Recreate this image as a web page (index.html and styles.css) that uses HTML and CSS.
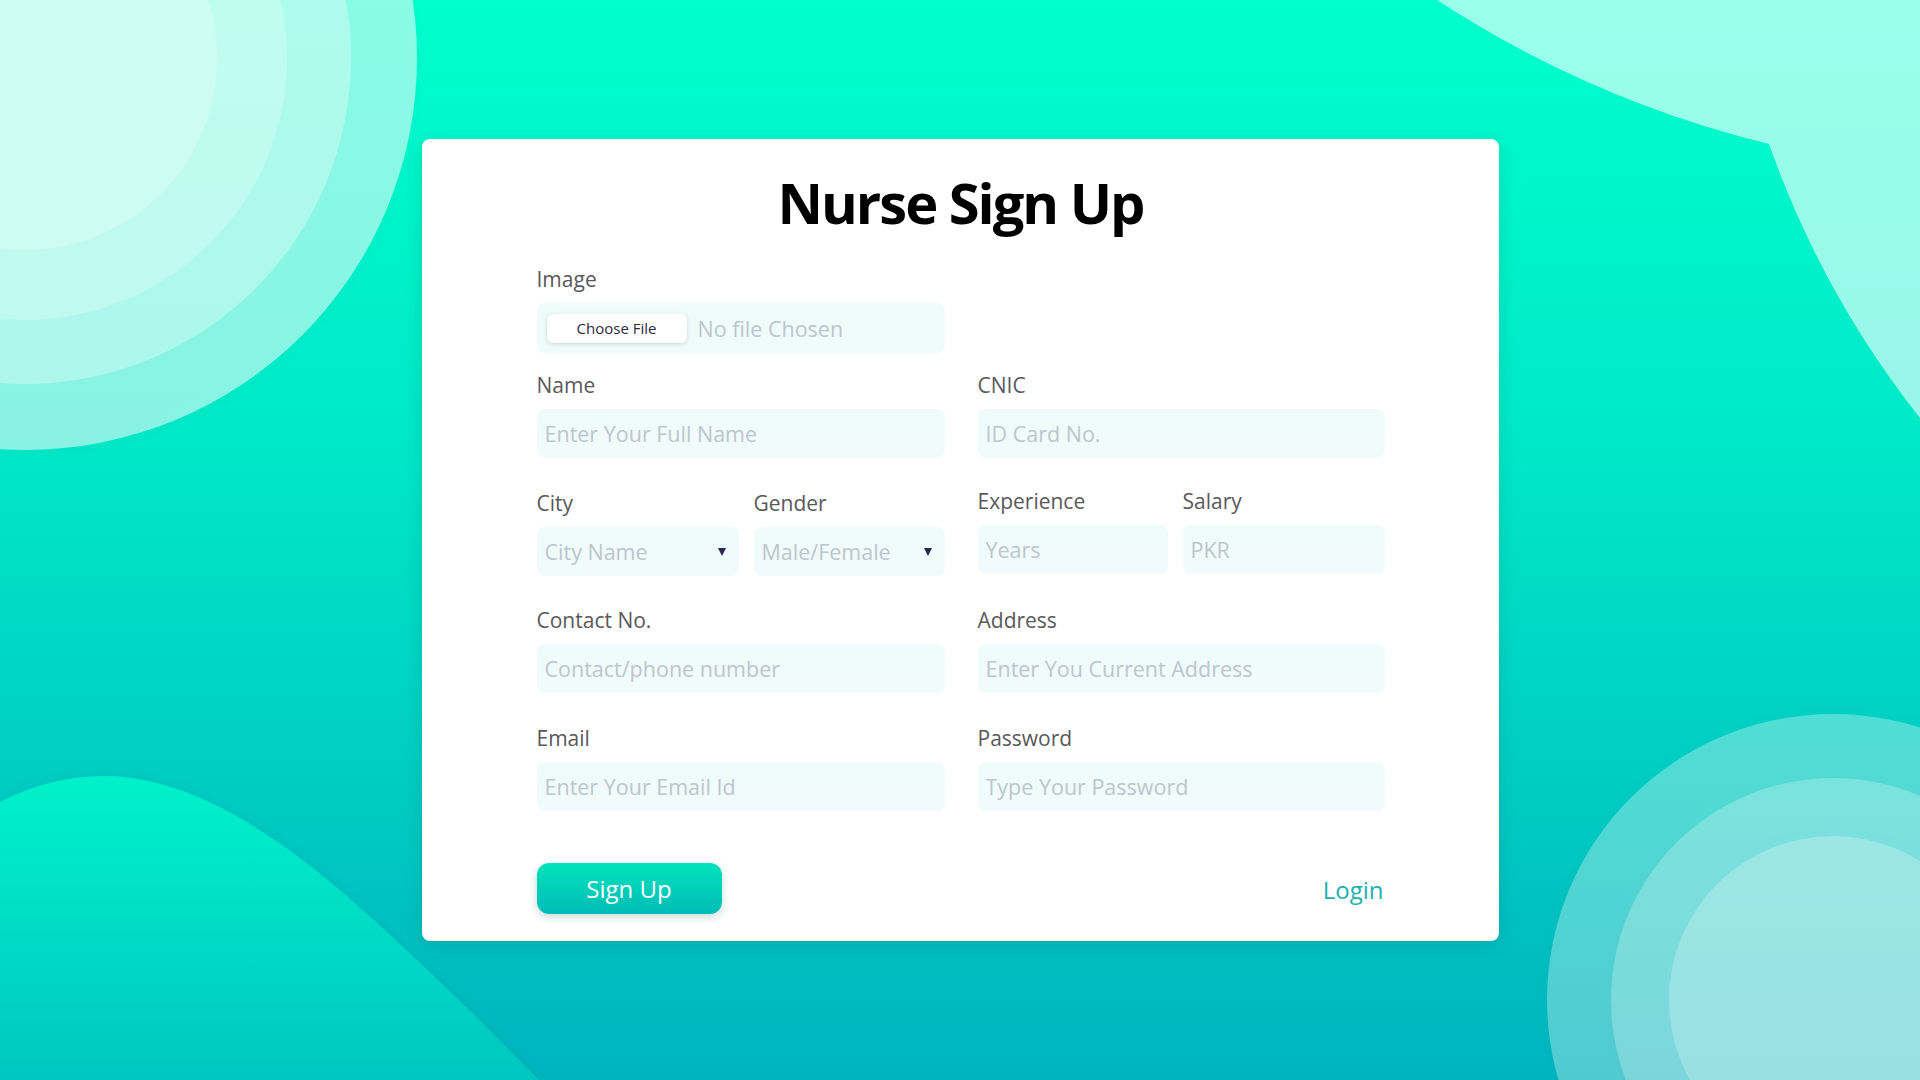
FILE: index.html
```html
<!DOCTYPE html>
<html lang="en">
<head>
<meta charset="utf-8">
<title>Nurse Sign Up</title>
<link rel="stylesheet" href="styles.css">
</head>
<body>
<svg class="bg" width="1920" height="1080" viewBox="0 0 1920 1080" aria-hidden="true">
  <defs>
    <filter id="soft" x="-20%" y="-20%" width="140%" height="140%">
      <feDropShadow dx="0" dy="0" stdDeviation="5" flood-color="#006a66" flood-opacity="0.12"/>
    </filter>
    <linearGradient id="hill" x1="0" y1="0" x2="0" y2="1">
      <stop offset="0" stop-color="#00f2ca"/>
      <stop offset="1" stop-color="#00c6c1"/>
    </linearGradient>
  </defs>
  <path d="M1437,0 Q1590,100 1769,144 Q1822,294 1920,418 L1920,0 Z" fill="#ffffff" fill-opacity="0.6"/>
  <g filter="url(#soft)">
    <circle cx="25" cy="58" r="392" fill="#ffffff" fill-opacity="0.52"/>
    <circle cx="25" cy="58" r="326" fill="#ffffff" fill-opacity="0.31"/>
    <circle cx="25" cy="58" r="262" fill="#ffffff" fill-opacity="0.23"/>
    <circle cx="25" cy="58" r="192" fill="#ffffff" fill-opacity="0.22"/>
  </g>
  <path filter="url(#soft)" d="M0,802 C35,784 70,776 104,776 C180,776 260,822 340,890 C420,960 490,1030 539,1080 L0,1080 Z" fill="url(#hill)"/>
  <g filter="url(#soft)">
    <circle cx="1833" cy="1000" r="286" fill="#ffffff" fill-opacity="0.3"/>
    <circle cx="1833" cy="1000" r="222" fill="#ffffff" fill-opacity="0.24"/>
    <circle cx="1833" cy="1000" r="164" fill="#ffffff" fill-opacity="0.23"/>
  </g>
</svg>

<main class="page">
  <form class="card" onsubmit="return false">
    <h1 class="title">Nurse Sign Up</h1>

    <div class="field field-image">
      <span class="label">Image</span>
      <label class="file-box">
        <span class="file-btn">Choose File</span>
        <span class="file-text">No file Chosen</span>
        <input class="file-input" type="file">
      </label>
    </div>

    <div class="grid">
      <div class="field">
        <label class="label">Name</label>
        <input class="control" type="text" placeholder="Enter Your Full Name">
      </div>
      <div class="field">
        <label class="label">CNIC</label>
        <input class="control" type="text" placeholder="ID Card No.">
      </div>

      <div class="pair pair-left">
        <div class="field">
          <label class="label">City</label>
          <div class="select-wrap">
            <select class="control select">
              <option>City Name</option>
            </select>
          </div>
        </div>
        <div class="field">
          <label class="label">Gender</label>
          <div class="select-wrap">
            <select class="control select">
              <option>Male/Female</option>
            </select>
          </div>
        </div>
      </div>
      <div class="pair pair-right">
        <div class="field">
          <label class="label">Experience</label>
          <input class="control" type="text" placeholder="Years">
        </div>
        <div class="field">
          <label class="label">Salary</label>
          <input class="control" type="text" placeholder="PKR">
        </div>
      </div>

      <div class="field">
        <label class="label">Contact No.</label>
        <input class="control" type="text" placeholder="Contact/phone number">
      </div>
      <div class="field">
        <label class="label">Address</label>
        <input class="control" type="text" placeholder="Enter You Current Address">
      </div>

      <div class="field">
        <label class="label">Email</label>
        <input class="control" type="email" placeholder="Enter Your Email Id">
      </div>
      <div class="field">
        <label class="label">Password</label>
        <input class="control" type="password" placeholder="Type Your Password">
      </div>
    </div>

    <div class="actions">
      <button class="btn-primary" type="submit">Sign Up</button>
      <a class="login-link" href="#">Login</a>
    </div>
  </form>
</main>
</body>
</html>
```

FILE: styles.css
```css
* {
  box-sizing: border-box;
}

html, body {
  margin: 0;
  padding: 0;
}

body {
  width: 1920px;
  height: 1080px;
  overflow: hidden;
  position: relative;
  background: linear-gradient(180deg, #00ffcc 0%, #00e9c8 40%, #00b4be 100%);
  font-family: "Open Sans", "Noto Sans", sans-serif;
}

.bg {
  position: absolute;
  left: 0;
  top: 0;
  z-index: 0;
}

.page {
  position: relative;
  z-index: 1;
  height: 1080px;
  display: flex;
  align-items: center;
  justify-content: center;
}

.card {
  width: 1077px;
  background: #ffffff;
  border-radius: 8px;
  padding: 28px 114px 27px 115px;
  box-shadow: 0 4px 18px rgba(0, 60, 60, 0.16);
  display: flex;
  flex-direction: column;
}

.title {
  margin: 0 0 28px;
  font-size: 56px;
  line-height: 70px;
  font-weight: 700;
  letter-spacing: -2px;
  text-align: center;
  color: #000000;
}

.field {
  display: flex;
  flex-direction: column;
}

.label {
  font-size: 21px;
  line-height: 28px;
  color: #595959;
  margin-bottom: 10px;
}

.field-image {
  width: 408px;
  margin-bottom: 18px;
}

.file-box {
  height: 50px;
  border-radius: 8px;
  background: #effcfa;
  display: flex;
  align-items: center;
  padding-left: 10px;
  gap: 11px;
  cursor: pointer;
}

.file-btn {
  width: 140px;
  height: 29px;
  border-radius: 6px;
  background: #ffffff;
  box-shadow: 0 1px 4px rgba(0, 0, 0, 0.16);
  font-size: 15px;
  color: #2d2a3e;
  display: flex;
  align-items: center;
  justify-content: center;
}

.file-text {
  font-size: 21.5px;
  color: #bdc5cd;
}

.file-input {
  display: none;
}

.grid {
  display: grid;
  grid-template-columns: 408px 407px;
  column-gap: 33px;
  row-gap: 30.5px;
}

.pair {
  display: grid;
  column-gap: 15px;
}

.pair-left {
  grid-template-columns: 202px 191px;
}

.pair-right {
  grid-template-columns: 190px 202px;
  margin-top: -2px;
}

.control {
  width: 100%;
  height: 49px;
  border: none;
  outline: none;
  border-radius: 8px;
  background: linear-gradient(180deg, #effcfa 0%, #f1fbfb 100%);
  padding: 0 10px 0 8px;
  font-family: "Open Sans", "Noto Sans", sans-serif;
  font-size: 21.5px;
  color: #333333;
}

.control::placeholder {
  color: #bdc5cd;
  opacity: 1;
}

.select-wrap {
  position: relative;
}

.select {
  appearance: none;
  -webkit-appearance: none;
  color: #bdc5cd;
  cursor: pointer;
}

.select-wrap::after {
  content: "";
  position: absolute;
  right: 13px;
  top: 21px;
  width: 0;
  height: 0;
  border-left: 4px solid transparent;
  border-right: 4px solid transparent;
  border-top: 8px solid #2c2752;
  pointer-events: none;
}

.actions {
  margin-top: 52px;
  display: flex;
  align-items: center;
  justify-content: space-between;
}

.btn-primary {
  width: 185px;
  height: 51px;
  border: none;
  border-radius: 12px;
  background: linear-gradient(180deg, #00e3bb 0%, #00bcb8 100%);
  box-shadow: 0 3px 8px rgba(0, 80, 80, 0.22);
  color: #ffffff;
  font-family: "Open Sans", "Noto Sans", sans-serif;
  font-size: 24px;
  cursor: pointer;
}

.login-link {
  font-size: 24px;
  color: #1db1ae;
  text-decoration: none;
  margin-right: 1px;
  margin-top: 3px;
}
```
